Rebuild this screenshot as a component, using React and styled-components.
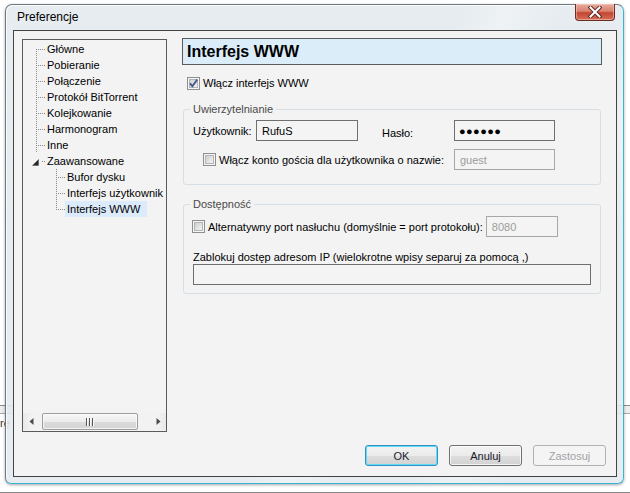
import React from "react"
import styled, { createGlobalStyle } from "styled-components"

const GlobalStyle = createGlobalStyle`
  html, body {
    margin: 0;
    padding: 0;
    background: #ffffff;
  }
  body {
    font-family: "Liberation Sans", Arial, sans-serif;
    font-size: 11px;
    color: #000;
  }
`

const tree = [
    { label: "Główne" },
    { label: "Pobieranie" },
    { label: "Połączenie" },
    { label: "Protokół BitTorrent" },
    { label: "Kolejkowanie" },
    { label: "Harmonogram" },
    { label: "Inne" },
    {
        label: "Zaawansowane",
        children: [
            { label: "Bufor dysku" },
            { label: "Interfejs użytkownik" },
            { label: "Interfejs WWW", selected: true },
        ],
    },
]

// dotted tree connectors, drawn pixel by pixel like the Windows tree view
const Connector = ({ kind }) => {
    const dots = []
    const dotColor = "#8a8a8a"
    let vFrom = 0
    let vTo = 16
    if (kind === "first") vFrom = 8
    if (kind === "last") vTo = 9
    if (kind === "expander") vTo = 0
    for (let y = vFrom; y < vTo; y += 2) {
        dots.push(<rect key={"v" + y} x="11" y={y} width="1" height="1" fill={dotColor} />)
    }
    const hFrom = kind === "expander" ? 17 : 13
    for (let x = hFrom; x < 20; x += 2) {
        dots.push(<rect key={"h" + x} x={x} y="8" width="1" height="1" fill={dotColor} />)
    }
    return (
        <svg width="20" height="16" viewBox="0 0 20 16" style={{ flex: "none" }}>
            {dots}
            {kind === "expander" && (
                <polygon points="13.5,6.5 13.5,12.5 7.5,12.5" fill="#262626" stroke="#5a5a5a" strokeWidth="0.6" />
            )}
        </svg>
    )
}

const CheckIcon = ({ checked }) => (
    <svg width="13" height="13" viewBox="0 0 13 13" style={{ flex: "none" }}>
        <defs>
            <linearGradient id="cbFill" x1="0" y1="0" x2="1" y2="1">
                <stop offset="0" stopColor="#cbcbcb" />
                <stop offset="1" stopColor="#f7f7f7" />
            </linearGradient>
        </defs>
        <rect x="0.5" y="0.5" width="12" height="12" fill="#f5f5f5" stroke="#8e8f8f" />
        <rect x="2.5" y="2.5" width="8" height="8" fill="url(#cbFill)" stroke="#b2b6bb" />
        {checked && (
            <path d="M3 6.3 L5.4 9.2 L10.2 2.6" stroke="#47598f" strokeWidth="1.9" fill="none" />
        )}
    </svg>
)

const Arrow = ({ dir }) => (
    <svg width="17" height="17" viewBox="0 0 17 17">
        {dir === "left" ? (
            <polygon points="10.5,5 10.5,12 6.5,8.5" fill="#4d4d4d" />
        ) : (
            <polygon points="7.5,5 7.5,12 11.5,8.5" fill="#4d4d4d" />
        )}
    </svg>
)

// the "III" grip in the middle of the scroll thumb
const Grip = () => (
    <svg width="8" height="8" viewBox="0 0 8 8">
        {[0, 3, 6].map((x) => (
            <g key={x}>
                <rect x={x} y="0" width="1" height="8" fill="#555" />
                <rect x={x + 1} y="0" width="1" height="8" fill="#fafafa" />
            </g>
        ))}
    </svg>
)

const CloseGlyph = () => (
    <svg width="14" height="12" viewBox="0 0 14 12">
        <path d="M2.5 1.5 L11.5 10.5 M11.5 1.5 L2.5 10.5" stroke="#5a2a24" strokeWidth="4" strokeLinecap="square" />
        <path d="M2.5 1.5 L11.5 10.5 M11.5 1.5 L2.5 10.5" stroke="#ffffff" strokeWidth="2" strokeLinecap="square" />
    </svg>
)

const App = () => {
    const rows = []
    tree.forEach((item, i) => {
        let kind = i === 0 ? "first" : "mid"
        if (item.children) kind = "expander"
        rows.push({ ...item, depth: 0, kind })
        if (item.children) {
            item.children.forEach((child, j) => {
                rows.push({
                    ...child,
                    depth: 1,
                    kind: j === item.children.length - 1 ? "last" : "mid",
                })
            })
        }
    })

    return (
        <Desktop>
            <GlobalStyle />
            <Backdrop>
                <BackBar />
                <BackCaption>rę</BackCaption>
                <BackEdge />
            </Backdrop>

            <Window>
                <TitleBar>
                    <Title>Preferencje</Title>
                    <CloseButton>
                        <CloseGlyph />
                    </CloseButton>
                </TitleBar>

                <Client>
                    <Body>
                        <TreePanel>
                            <TreeList>
                                {rows.map((row) => (
                                    <TreeRow key={row.label} $depth={row.depth}>
                                        <Connector kind={row.kind} />
                                        <TreeLabel $selected={row.selected}>{row.label}</TreeLabel>
                                    </TreeRow>
                                ))}
                            </TreeList>
                            <ScrollBar>
                                <ScrollArrow>
                                    <Arrow dir="left" />
                                </ScrollArrow>
                                <Track>
                                    <Thumb>
                                        <Grip />
                                    </Thumb>
                                </Track>
                                <ScrollArrow>
                                    <Arrow dir="right" />
                                </ScrollArrow>
                            </ScrollBar>
                        </TreePanel>

                        <Page>
                            <PageHeader>Interfejs WWW</PageHeader>

                            <CheckRow $indent={5}>
                                <CheckIcon checked />
                                <span>Włącz interfejs WWW</span>
                            </CheckRow>

                            <Group>
                                <legend>Uwierzytelnianie</legend>
                                <AuthGrid>
                                    <FieldLabel>Użytkownik:</FieldLabel>
                                    <TextBox>RufuS</TextBox>
                                    <FieldLabel $drop>Hasło:</FieldLabel>
                                    <TextBox $password>●●●●●●</TextBox>

                                    <GuestCheck>
                                        <CheckIcon />
                                        <span>Włącz konto gościa dla użytkownika o nazwie:</span>
                                    </GuestCheck>
                                    <TextBox $disabled>guest</TextBox>
                                </AuthGrid>
                            </Group>

                            <Group $spaced>
                                <legend>Dostępność</legend>
                                <PortRow>
                                    <CheckIcon />
                                    <span>Alternatywny port nasłuchu (domyślnie = port protokołu):</span>
                                    <TextBox $disabled $width={72}>8080</TextBox>
                                </PortRow>
                                <BlockLabel>Zablokuj dostęp adresom IP (wielokrotne wpisy separuj za pomocą ,)</BlockLabel>
                                <TextBox $wide />
                            </Group>
                        </Page>
                    </Body>

                    <ButtonRow>
                        <Button $default>OK</Button>
                        <Button>Anuluj</Button>
                        <Button disabled>Zastosuj</Button>
                    </ButtonRow>
                </Client>
            </Window>
        </Desktop>
    )
}

export default App

const Desktop = styled.div`
    position: relative;
    width: 630px;
    height: 493px;
    overflow: hidden;
    background: #ffffff;
`

const Backdrop = styled.div`
    padding-top: 405px;
`

const BackBar = styled.div`
    height: 7px;
    border-top: 1px solid #8c8c8c;
    border-bottom: 1px solid #a9a9a9;
    background: #eeeeee;
`

const BackCaption = styled.div`
    margin-top: 3px;
    height: 13px;
    line-height: 13px;
    color: #333;
`

const BackEdge = styled.div`
    margin-top: 62px;
    border-top: 1px solid #888;
`

const Window = styled.div`
    position: absolute;
    left: 5px;
    top: 4px;
    width: 619px;
    height: 480px;
    box-sizing: border-box;
    display: flex;
    flex-direction: column;
    border: 1px solid rgba(70, 80, 90, 0.75);
    border-right-color: #3ab2d2;
    border-bottom-color: #3ab2d2;
    border-radius: 7px 7px 6px 6px;
    background:
        linear-gradient(115deg, transparent 0%, transparent 55%, rgba(255, 255, 255, 0.35) 60%, transparent 66%, transparent 75%, rgba(255, 255, 255, 0.3) 80%, transparent 86%),
        rgba(226, 233, 238, 0.88);
    box-shadow: inset 1px 1px 0 rgba(255, 255, 255, 0.8), 0 1px 3px rgba(0, 0, 0, 0.35);
`

const TitleBar = styled.div`
    display: flex;
    align-items: flex-start;
    justify-content: space-between;
    height: 25px;
    padding: 0 8px 0 11px;
`

const Title = styled.div`
    padding-top: 5px;
    font-size: 12px;
    line-height: 14px;
    color: #000;
`

const CloseButton = styled.div`
    width: 40px;
    height: 17px;
    margin-top: -1px;
    box-sizing: border-box;
    display: flex;
    align-items: center;
    justify-content: center;
    border: 1px solid #6b2c24;
    border-top: none;
    border-radius: 0 0 4px 4px;
    background: linear-gradient(#e8aa9c 0%, #d98270 45%, #c4452f 55%, #d5705a 100%);
    box-shadow: inset 0 0 0 1px rgba(255, 220, 210, 0.45);
`

const Client = styled.div`
    flex: 1;
    display: flex;
    flex-direction: column;
    margin: 0 6px 6px 7px;
    padding: 8px 10px 10px 8px;
    border: 1px solid #434343;
    background: #f3f3f3;
`

const Body = styled.div`
    display: flex;
    align-items: flex-start;
    height: 393px;
`

const TreePanel = styled.div`
    width: 145px;
    height: 393px;
    box-sizing: border-box;
    flex: none;
    display: flex;
    flex-direction: column;
    border: 1px solid #5a5a5a;
    background: #f3f3f3;
`

const TreeList = styled.div`
    flex: 1;
    overflow: hidden;
    padding-top: 1px;
`

const TreeRow = styled.div`
    display: flex;
    align-items: center;
    height: 16px;
    padding-left: ${(p) => 2 + p.$depth * 20}px;
    white-space: nowrap;
`

const TreeLabel = styled.span`
    line-height: 16px;
    padding: ${(p) => (p.$selected ? "0 7px 0 2px" : "0 2px")};
    background: ${(p) => (p.$selected ? "#dcebfb" : "transparent")};
    color: #000;
`

const ScrollBar = styled.div`
    display: flex;
    height: 17px;
    margin-bottom: 1px;
    background: linear-gradient(90deg, #e9e9e9, #f2f2f2 6%, #f2f2f2 94%, #e9e9e9);
`

const ScrollArrow = styled.div`
    width: 17px;
    height: 17px;
    flex: none;
`

const Track = styled.div`
    flex: 1;
    padding: 0 0 0 2px;
    display: flex;
`

const Thumb = styled.div`
    width: 96px;
    height: 17px;
    box-sizing: border-box;
    display: flex;
    align-items: center;
    justify-content: center;
    border: 1px solid #9c9c9c;
    border-radius: 2px;
    background: linear-gradient(#f6f6f6 0%, #ececec 50%, #dcdcdc 51%, #d4d4d4 100%);
    box-shadow: inset 0 0 0 1px rgba(255, 255, 255, 0.7);
`

const Page = styled.div`
    flex: 1;
    display: flex;
    flex-direction: column;
    margin: -1px 4px 0 15px;
`

const PageHeader = styled.div`
    height: 27px;
    box-sizing: border-box;
    display: flex;
    align-items: center;
    padding-left: 4px;
    border: 1px solid #5a5a5a;
    background: #dbedf9;
    font-size: 16px;
    font-weight: bold;
    color: #000;
`

const CheckRow = styled.label`
    display: flex;
    align-items: center;
    gap: 3px;
    height: 16px;
    margin-top: 10px;
    padding-left: ${(p) => p.$indent}px;
`

const Group = styled.fieldset`
    margin: ${(p) => (p.$spaced ? "13px" : "12px")} 1px 0 1px;
    padding: ${(p) => (p.$spaced ? "5px 9px 8px" : "4px 9px 14px")};
    min-width: 0;
    border: 1px solid #d5dfe5;
    border-radius: 3px;

    legend {
        margin-left: -3px;
        padding: 0 3px;
        line-height: 13px;
        color: #4a4a4a;
    }
`

const AuthGrid = styled.div`
    display: grid;
    grid-template-columns: 63px 102px 96px 101px;
    row-gap: 8px;
    align-items: center;
`

const FieldLabel = styled.span`
    align-self: ${(p) => (p.$drop ? "end" : "center")};
    padding-left: ${(p) => (p.$drop ? "24px" : "0")};
    padding-bottom: ${(p) => (p.$drop ? "2px" : "0")};
`

const GuestCheck = styled.label`
    grid-column: 1 / 4;
    display: flex;
    align-items: center;
    gap: 3px;
    padding-left: 10px;
`

const TextBox = styled.div`
    height: 21px;
    box-sizing: border-box;
    width: ${(p) => (p.$wide ? "auto" : p.$width ? p.$width + "px" : "auto")};
    display: flex;
    align-items: center;
    padding-left: ${(p) => (p.$password ? "4px" : "5px")};
    border: 1px solid ${(p) => (p.$disabled ? "#a7a7a7" : "#6f6f6f")};
    background: #f4f4f4;
    color: ${(p) => (p.$disabled ? "#9c9c9c" : "#000")};
    letter-spacing: ${(p) => (p.$password ? "0.4px" : "0")};
    white-space: nowrap;
`

const PortRow = styled.div`
    display: flex;
    align-items: center;
    gap: 3px;
    margin-left: -1px;
`

const BlockLabel = styled.div`
    margin-top: 14px;
    line-height: 13px;
`

const ButtonRow = styled.div`
    display: flex;
    justify-content: flex-end;
    gap: 11px;
    margin-top: 13px;
`

const Button = styled.button`
    width: 73px;
    height: 21px;
    padding: 0;
    font-family: "Liberation Sans", Arial, sans-serif;
    font-size: 11px;
    color: #1a1a2e;
    border: 1px solid ${(p) => (p.$default ? "#3591c4" : "#707070")};
    border-radius: 3px;
    background: linear-gradient(#f3f3f3 0%, #ebebeb 50%, #dedede 51%, #d2d2d2 100%);
    box-shadow: ${(p) => (p.$default ? "inset 0 0 0 1px #5fdcf8" : "inset 0 0 0 1px rgba(255, 255, 255, 0.75)")};

    &:disabled {
        color: #a3a3a3;
        border-color: #adb2b5;
        background: #f4f4f4;
        box-shadow: none;
    }
`
